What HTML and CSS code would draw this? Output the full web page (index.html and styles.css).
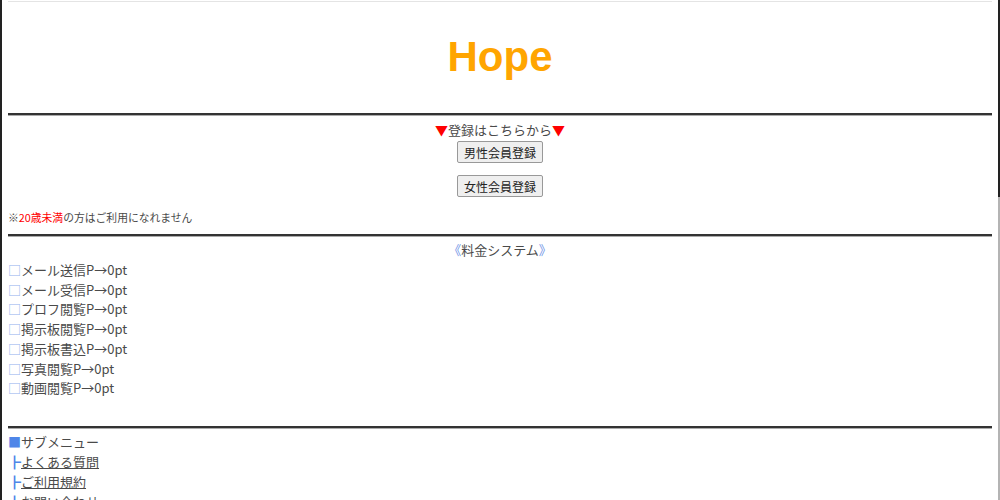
FILE: index.html
```html
<!DOCTYPE html>
<html lang="ja">
<head>
  <meta charset="UTF-8" />
  <title>Hope</title>
  <link rel="stylesheet" href="styles.css">
</head>
<body>
  <div class="page">
    <div class="topline"></div>

    <div class="header">
      <h1>Hope</h1>
    </div>

    <hr>

    <!-- 登録 -->
    <section class="register">
      <p class="lead"><span class="red">▼</span>登録はこちらから<span class="red">▼</span></p>
      <button type="button">男性会員登録</button>
      <button type="button" class="second">女性会員登録</button>
      <p class="note">※<span class="red">20歳未満</span>の方はご利用になれません</p>
    </section>

    <hr class="mid">

    <!-- 料金システム -->
    <section class="price">
      <p class="title"><span class="blue">《</span>料金システム<span class="blue">》</span></p>
      <ul>
        <li><span class="box">□</span>メール送信P→0pt</li>
        <li><span class="box">□</span>メール受信P→0pt</li>
        <li><span class="box">□</span>プロフ閲覧P→0pt</li>
        <li><span class="box">□</span>掲示板閲覧P→0pt</li>
        <li><span class="box">□</span>掲示板書込P→0pt</li>
        <li><span class="box">□</span>写真閲覧P→0pt</li>
        <li><span class="box">□</span>動画閲覧P→0pt</li>
      </ul>
    </section>

    <hr class="sub">

    <!-- サブメニュー -->
    <section class="submenu">
      <ul>
        <li><span class="mark">■</span>サブメニュー</li>
        <li><span class="mark">┣</span><a href="#">よくある質問</a></li>
        <li><span class="mark">┣</span><a href="#">ご利用規約</a></li>
        <li><span class="mark">┣</span><a href="#">お問い合わせ</a></li>
      </ul>
    </section>
  </div>
</body>
</html>
```

FILE: styles.css
```css
html {
  background:
    linear-gradient(#222, #222) right top / 2px 197px no-repeat,
    linear-gradient(#b4b4b4, #b4b4b4) right top / 2px 100% no-repeat,
    linear-gradient(#222, #222) left top / 2px 100% no-repeat,
    #fff;
  min-height: 100%;
}
body {
  margin: 0;
  font-family: "Noto Sans CJK JP", "Noto Sans", sans-serif;
  color: #4a4a4a;
  font-size: 13px;
}
.page {
  padding: 0 8px;
}
.topline {
  margin-top: 1px;
  height: 1px;
  background: #e4e4e4;
}
.header {
  padding: 31px 0 32px;
  text-align: center;
}
h1 {
  margin: 0;
  font-family: "Liberation Sans", Arial, sans-serif;
  font-size: 42px;
  line-height: 48px;
  color: #ffa500;
}
hr {
  margin: 0;
  height: 0;
  border: 0;
  border-top: 2px solid #333;
  border-bottom: 1px solid #aaa;
}
.red {
  color: #f00;
}
.blue {
  color: #6f95e6;
}
.register {
  text-align: center;
}
.lead {
  margin: 5px 0 0;
  line-height: 18px;
}
button {
  display: block;
  margin: 2px auto 0;
  width: 86px;
  height: 22px;
  padding: 0;
  font-family: "Noto Sans CJK JP", sans-serif;
  font-size: 12px;
  color: #222;
  background: #efefef;
  border: 1px solid #999;
  border-radius: 2px;
}
button.second {
  margin-top: 12px;
}
.note {
  margin: 12px 0 0;
  text-align: left;
  font-size: 10.8px;
  line-height: 16px;
}
hr.mid {
  margin-top: 9px;
}
.title {
  margin: 3px 0 0;
  text-align: center;
  line-height: 20px;
}
ul {
  margin: 0;
  padding: 0;
  list-style: none;
}
.price li {
  line-height: 19.7px;
}
.box {
  color: #8fb0ee;
}
hr.sub {
  margin-top: 28px;
}
.submenu {
  margin-top: 3px;
}
.submenu li {
  line-height: 20px;
}
.mark {
  color: #4f86e8;
}
.submenu a {
  color: #4a4a4a;
}
```
